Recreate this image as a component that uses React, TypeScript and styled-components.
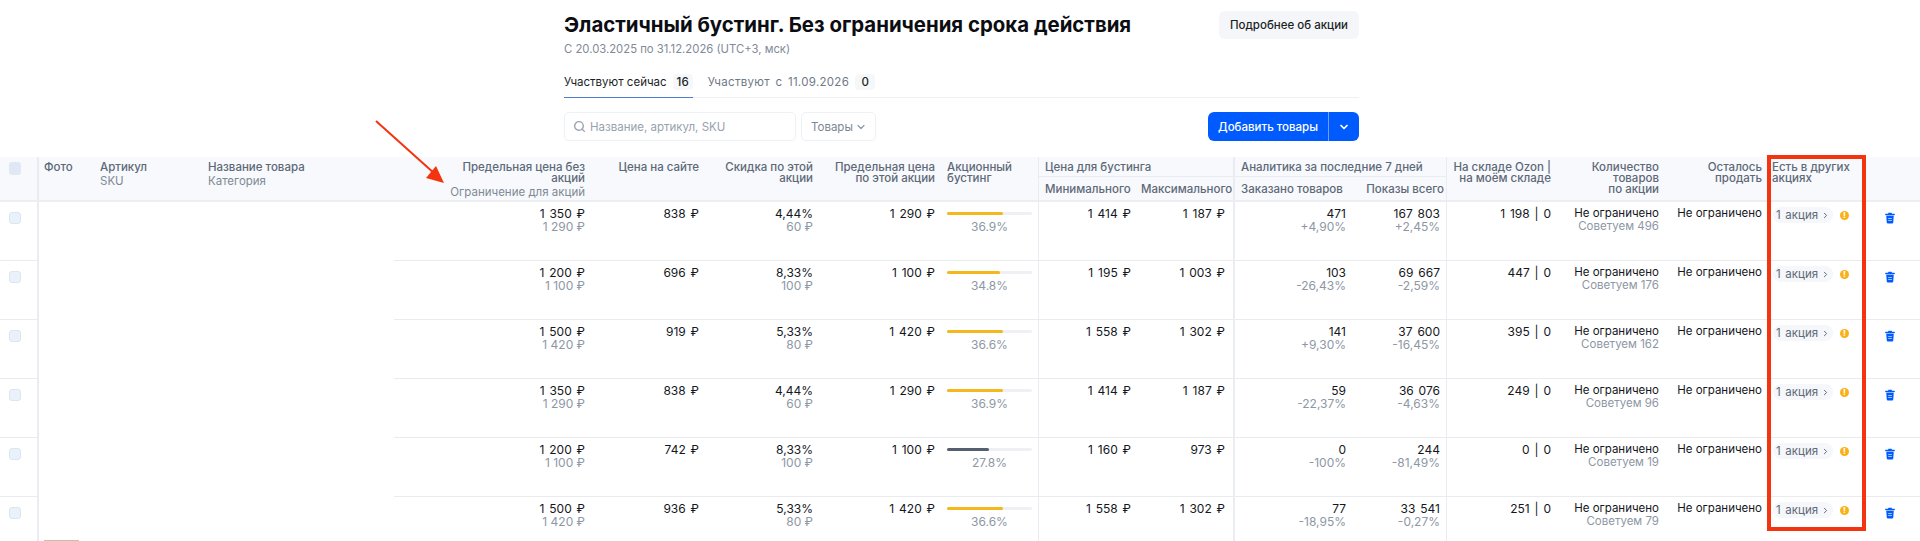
import React from 'react';
import styled, { createGlobalStyle } from 'styled-components';
import { Search, ChevronDown, ChevronRight } from 'lucide-react';

const GlobalStyle = createGlobalStyle`
  html, body {
    margin: 0;
    height: 541px;
    overflow: hidden;
    background: #fff;
    font-family: Inter, "Noto Sans", sans-serif;
    color: #1b1f27;
  }
`;

const rows = [
  { limit: '1 350 ₽', limitSub: '1 290 ₽', site: '838 ₽', pct: '4,44%', off: '60 ₽', cap: '1 290 ₽', boost: '36.9%', fill: 66, min: '1 414 ₽', max: '1 187 ₽', orders: '471', ordersDelta: '+4,90%', views: '167 803', viewsDelta: '+2,45%', stock: '1 198 | 0', advice: 496 },
  { limit: '1 200 ₽', limitSub: '1 100 ₽', site: '696 ₽', pct: '8,33%', off: '100 ₽', cap: '1 100 ₽', boost: '34.8%', fill: 62, min: '1 195 ₽', max: '1 003 ₽', orders: '103', ordersDelta: '-26,43%', views: '69 667', viewsDelta: '-2,59%', stock: '447 | 0', advice: 176 },
  { limit: '1 500 ₽', limitSub: '1 420 ₽', site: '919 ₽', pct: '5,33%', off: '80 ₽', cap: '1 420 ₽', boost: '36.6%', fill: 65.5, min: '1 558 ₽', max: '1 302 ₽', orders: '141', ordersDelta: '+9,30%', views: '37 600', viewsDelta: '-16,45%', stock: '395 | 0', advice: 162 },
  { limit: '1 350 ₽', limitSub: '1 290 ₽', site: '838 ₽', pct: '4,44%', off: '60 ₽', cap: '1 290 ₽', boost: '36.9%', fill: 66, min: '1 414 ₽', max: '1 187 ₽', orders: '59', ordersDelta: '-22,37%', views: '36 076', viewsDelta: '-4,63%', stock: '249 | 0', advice: 96 },
  { limit: '1 200 ₽', limitSub: '1 100 ₽', site: '742 ₽', pct: '8,33%', off: '100 ₽', cap: '1 100 ₽', boost: '27.8%', fill: 49, low: true, min: '1 160 ₽', max: '973 ₽', orders: '0', ordersDelta: '-100%', views: '244', viewsDelta: '-81,49%', stock: '0 | 0', advice: 19 },
  { limit: '1 500 ₽', limitSub: '1 420 ₽', site: '936 ₽', pct: '5,33%', off: '80 ₽', cap: '1 420 ₽', boost: '36.6%', fill: 65.5, min: '1 558 ₽', max: '1 302 ₽', orders: '77', ordersDelta: '-18,95%', views: '33 541', viewsDelta: '-0,27%', stock: '251 | 0', advice: 79 },
];

const columnWidths = [39, 55, 108, 192, 197, 114, 114, 122, 98, 98, 98, 117, 95, 110, 108, 103, 98, 54];

const TrashIcon = () => (
  <svg width="10" height="12" viewBox="0 0 12 14" fill="#005bff">
    <path d="M4.2 0.6h3.6l.6 1.2H11a.8.8 0 0 1 0 1.8H1a.8.8 0 0 1 0-1.8h2.6z" />
    <path d="M1.5 4.4h9l-.6 8a1.4 1.4 0 0 1-1.4 1.2h-5a1.4 1.4 0 0 1-1.4-1.2z" />
    <rect x="3.8" y="7" width="4.4" height="1" fill="#fff" opacity=".75" />
    <rect x="3.8" y="9.4" width="4.4" height="1" fill="#fff" opacity=".75" />
  </svg>
);

const App = () => (
  <Page>
    <GlobalStyle />
    <Top>
      <TitleRow>
        <div>
          <Title>Эластичный бустинг. Без ограничения срока действия</Title>
          <Dates>С 20.03.2025 по 31.12.2026 (UTC+3, мск)</Dates>
        </div>
        <MoreButton>Подробнее об акции</MoreButton>
      </TitleRow>

      <Tabs>
        <Tab $active>
          Участвуют сейчас <Count>16</Count>
        </Tab>
        <Tab>
          Участвуют с 11.09.2026 <Count>0</Count>
        </Tab>
      </Tabs>

      <Toolbar>
        <SearchBox>
          <Search size={13} strokeWidth={2.6} color="#9aa3af" />
          Название, артикул, SKU
        </SearchBox>
        <SelectBox>
          Товары
          <ChevronDown size={12} color="#8d97a5" strokeWidth={2.4} />
        </SelectBox>
        <AddButton>
          <AddLabel>Добавить товары</AddLabel>
          <AddCaret>
            <ChevronDown size={12} strokeWidth={3.4} color="#fff" />
          </AddCaret>
        </AddButton>
      </Toolbar>
    </Top>

    <Table>
      <colgroup>
        {columnWidths.map((width, i) => (
          <col key={i} width={width} />
        ))}
      </colgroup>
      <thead>
        <tr>
          <Head rowSpan={2} $divider={2}>
            <HeadCheck />
          </Head>
          <Head rowSpan={2} $left={5}>
            Фото
          </Head>
          <Head rowSpan={2}>
            Артикул
            <HeadSub>SKU</HeadSub>
          </Head>
          <Head rowSpan={2}>
            Название товара
            <HeadSub>Категория</HeadSub>
          </Head>
          <Head rowSpan={2} $right>
            Предельная цена без
            <br />
            акций
            <HeadSub>Ограничение для акций</HeadSub>
          </Head>
          <Head rowSpan={2} $right>
            Цена на сайте
          </Head>
          <Head rowSpan={2} $right>
            Скидка по этой
            <br />
            акции
          </Head>
          <Head rowSpan={2} $right>
            Предельная цена
            <br />
            по этой акции
          </Head>
          <Head rowSpan={2} $divider={1}>
            Акционный
            <br />
            бустинг
          </Head>
          <GroupHead colSpan={2} $divider={2}>
            Цена для бустинга
          </GroupHead>
          <GroupHead colSpan={2} $divider={1}>
            Аналитика за последние 7 дней
          </GroupHead>
          <Head rowSpan={2} $right>
            На складе Ozon |
            <br />
            на моём складе
          </Head>
          <Head rowSpan={2} $right>
            Количество
            <br />
            товаров
            <br />
            по акции
          </Head>
          <Head rowSpan={2} $right>
            Осталось
            <br />
            продать
          </Head>
          <Head rowSpan={2} $left={4}>
            Есть в других
            <br />
            акциях
          </Head>
          <Head rowSpan={2} />
        </tr>
        <tr>
          <SubHead>Минимального</SubHead>
          <SubHead $divider={2} $left={4}>
            Максимального
          </SubHead>
          <SubHead>Заказано товаров</SubHead>
          <SubHead $divider={1} $right>
            Показы всего
          </SubHead>
        </tr>
      </thead>
      <tbody>
        {rows.map((row, i) => (
          <tr key={i}>
            <Cell $divider={2}>
              <RowCheck />
            </Cell>
            <BlankCell colSpan={3}>{i === rows.length - 1 && <Thumb />}</BlankCell>
            <Cell $right>
              {row.limit}
              <Muted>{row.limitSub}</Muted>
            </Cell>
            <Cell $right>{row.site}</Cell>
            <Cell $right>
              {row.pct}
              <Muted>{row.off}</Muted>
            </Cell>
            <Cell $right>{row.cap}</Cell>
            <Cell $divider={1}>
              <BarTrack>
                <BarFill $low={row.low} style={{ width: `${row.fill}%` }} />
              </BarTrack>
              <BarLabel>{row.boost}</BarLabel>
            </Cell>
            <Cell $right>{row.min}</Cell>
            <Cell $right $divider={2} $pad={8}>
              {row.max}
            </Cell>
            <Cell $right>
              {row.orders}
              <Muted>{row.ordersDelta}</Muted>
            </Cell>
            <Cell $right $divider={1}>
              {row.views}
              <Muted>{row.viewsDelta}</Muted>
            </Cell>
            <Cell $right>{row.stock}</Cell>
            <Cell $right $text>
              Не ограничено
              <Muted>Советуем {row.advice}</Muted>
            </Cell>
            <Cell $right $text>
              Не ограничено
            </Cell>
            <Cell>
              <PromoRow>
                <PromoPill>
                  1 акция
                  <ChevronRight size={9} strokeWidth={2.6} color="#5d6878" />
                </PromoPill>
                <WarnDot>!</WarnDot>
              </PromoRow>
            </Cell>
            <TrashCell>
              <TrashIcon />
            </TrashCell>
          </tr>
        ))}
      </tbody>
    </Table>

    <Callout />
    <Arrow width="90" height="80" viewBox="0 0 90 80">
      <line x1="1" y1="1" x2="60" y2="54" stroke="#f4330f" strokeWidth="2" />
      <path d="M69 63 L51 58 L61 46 Z" fill="#f4330f" />
    </Arrow>
  </Page>
);

const Page = styled.div`
  position: relative;
  width: 1920px;
  height: 541px;
  overflow: hidden;
`;

const Top = styled.div`
  width: 795px;
  margin-left: 564px;
  padding-top: 11px;
`;

const TitleRow = styled.div`
  display: flex;
  justify-content: space-between;
  align-items: flex-start;
`;

const Title = styled.h1`
  margin: 0;
  font-size: 20.4px;
  line-height: 28px;
  font-weight: 700;
  color: #0b0d12;
`;

const Dates = styled.div`
  margin-top: 3px;
  font-size: 11.3px;
  line-height: 14px;
  color: #808a98;
`;

const MoreButton = styled.button`
  width: 140px;
  height: 28px;
  padding: 0;
  border: 0;
  border-radius: 6px;
  background: #f5f6f9;
  font: 500 11.5px Inter, sans-serif;
  color: #1b1f27;
`;

const Tabs = styled.div`
  display: flex;
  gap: 15px;
  margin-top: 13px;
  border-bottom: 1px solid #eef0f4;
`;

const Tab = styled.div<{ $active?: boolean }>`
  display: flex;
  align-items: center;
  gap: 6px;
  height: 29px;
  margin-bottom: -1px;
  padding-bottom: 3px;
  box-sizing: border-box;
  font-size: 11.5px;
  letter-spacing: ${(p) => (p.$active ? '0' : '.3px')};
  word-spacing: ${(p) => (p.$active ? '0' : '2px')};
  color: ${(p) => (p.$active ? '#1b1f27' : '#6f7987')};
  border-bottom: 1px solid ${(p) => (p.$active ? '#4d7fd1' : 'transparent')};
`;

const Count = styled.span`
  display: inline-flex;
  align-items: center;
  justify-content: center;
  min-width: 12px;
  height: 16px;
  padding: 0 4px;
  border-radius: 4px;
  background: #f6f7f9;
  font-size: 11.5px;
  font-weight: 500;
  letter-spacing: 0;
  color: #1b1f27;
`;

const Toolbar = styled.div`
  display: flex;
  align-items: stretch;
  gap: 5px;
  height: 29px;
  margin-top: 14px;
`;

const SearchBox = styled.div`
  display: flex;
  align-items: center;
  gap: 4px;
  width: 232px;
  padding-left: 8px;
  box-sizing: border-box;
  border: 1px solid #eff1f4;
  border-radius: 5px;
  font-size: 11.5px;
  color: #98a1ad;
`;

const SelectBox = styled.div`
  display: flex;
  align-items: center;
  justify-content: space-between;
  width: 75px;
  padding: 0 8px 0 9px;
  box-sizing: border-box;
  border: 1px solid #eff1f4;
  border-radius: 5px;
  font-size: 11.5px;
  color: #7d8794;
`;

const AddButton = styled.div`
  display: flex;
  margin-left: auto;
  width: 151px;
  border-radius: 6px;
  background: #005bff;
  color: #fff;
  font-size: 11.5px;
  font-weight: 500;
`;

const AddLabel = styled.div`
  display: flex;
  flex: 1;
  align-items: center;
  justify-content: center;
`;

const AddCaret = styled.div`
  display: flex;
  align-items: center;
  justify-content: center;
  width: 30px;
  border-left: 1px solid #6c9fff;
`;

const Table = styled.table`
  width: 1920px;
  margin-top: 16px;
  table-layout: fixed;
  border-collapse: separate;
  border-spacing: 0;
  font-size: 12px;
`;

const Head = styled.th<{ $right?: boolean; $divider?: number; $left?: number }>`
  padding: 5px 6px 0 ${(p) => p.$left ?? 6}px;
  box-sizing: border-box;
  vertical-align: top;
  background: #f7f9fc;
  border-bottom: 2px solid #eceef2;
  border-right: ${(p) => (p.$divider ? `${p.$divider}px solid #e9ecf0` : '0')};
  text-align: ${(p) => (p.$right ? 'right' : 'left')};
  font-size: 11.5px;
  line-height: 11px;
  font-weight: 500;
  color: #5d6878;
  white-space: nowrap;
`;

const GroupHead = styled(Head)`
  height: 20px;
  border-bottom: 1px solid #e9ecf0;
`;

const SubHead = styled(Head)`
  height: 25px;
  padding: 6px 2px 0 ${(p) => p.$left ?? 6}px;
  line-height: 13px;
`;

const HeadSub = styled.div`
  margin-top: 2px;
  line-height: 13px;
  font-weight: 400;
  color: #7f8996;
`;

const HeadCheck = styled.div`
  width: 12px;
  height: 13px;
  margin-left: 3px;
  border: 0;
  border-radius: 3px;
  background: #dfe8f4;
`;

const Cell = styled.td<{ $right?: boolean; $divider?: number; $pad?: number; $text?: boolean }>`
  height: 59px;
  padding: 5px ${(p) => p.$pad ?? 6}px 0 6px;
  box-sizing: border-box;
  vertical-align: top;
  border-bottom: 1px solid #e9ebef;
  border-right: ${(p) => (p.$divider ? `${p.$divider}px solid #e9ecf0` : '0')};
  text-align: ${(p) => (p.$right ? 'right' : 'left')};
  font-size: ${(p) => (p.$text ? '11.5px' : '12px')};
  word-spacing: ${(p) => (p.$text ? '0' : '1.5px')};
  line-height: 13px;
  white-space: nowrap;
  color: #14171d;
`;

const BlankCell = styled.td`
  padding: 43px 0 0 5px;
  vertical-align: top;
`;

const Thumb = styled.div`
  width: 35px;
  height: 36px;
  background: #c8c1a6;
`;

const TrashCell = styled(Cell)`
  padding: 10px 0 0 19px;
`;

const RowCheck = styled.div`
  width: 12px;
  height: 12px;
  margin: 5px 0 0 3px;
  border: 1px solid #dbe6f1;
  box-sizing: border-box;
  border-radius: 3px;
  background: #e9f2fb;
`;

const Muted = styled.div`
  word-spacing: 0;
  color: #8d97a5;
`;

const BarTrack = styled.div`
  height: 3px;
  margin: 5px 0 0;
  border-radius: 2px;
  background: #eef0f3;
`;

const BarFill = styled.div<{ $low?: boolean }>`
  height: 100%;
  border-radius: 2px;
  background: ${(p) => (p.$low ? '#565f70' : '#f5b81c')};
`;

const BarLabel = styled.div`
  margin-top: 5px;
  text-align: center;
  color: #8d97a5;
`;

const PromoRow = styled.div`
  display: flex;
  align-items: center;
  gap: 7px;
  margin: 0 0 0 -1px;
`;

const PromoPill = styled.div`
  display: flex;
  align-items: center;
  justify-content: center;
  gap: 3px;
  width: 60px;
  height: 16px;
  border-radius: 8px;
  background: #f5f7fa;
  font-size: 11.5px;
  color: #5f6978;
`;

const WarnDot = styled.div`
  width: 9px;
  height: 9px;
  border-radius: 50%;
  background: #fbb016;
  color: #fff;
  font-size: 8px;
  line-height: 9px;
  font-weight: 800;
  text-align: center;
`;

const Callout = styled.div`
  position: absolute;
  left: 1767px;
  top: 155px;
  width: 99px;
  height: 376px;
  box-sizing: border-box;
  border: 4px solid #f4330f;
`;

const Arrow = styled.svg`
  position: absolute;
  left: 375px;
  top: 120px;
`;

export default App;
